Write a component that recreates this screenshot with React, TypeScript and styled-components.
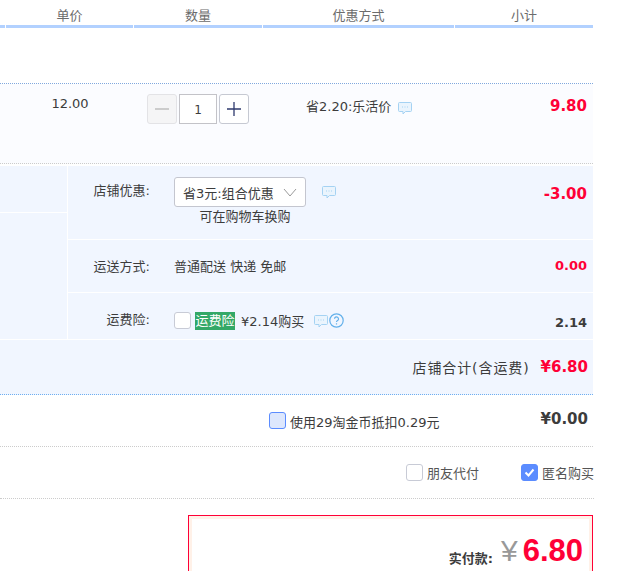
import React from 'react'
import styled, { createGlobalStyle } from 'styled-components'

const GlobalStyle = createGlobalStyle`
  html, body {
    margin: 0;
    height: 571px;
    overflow: hidden;
    background: #fff;
  }
  body {
    font-family: "DejaVu Sans", "Noto Sans CJK SC", sans-serif;
    font-size: 13px;
    color: #3c3c3c;
  }
`

const Page = styled.div`
  width: 593px;
`

const HeaderRow = styled.div`
  display: grid;
  grid-template-columns: 5px 127px 128px 191px 138px;
  gap: 1px;
  height: 28px;
`

const HeaderCell = styled.div`
  height: 25px;
  line-height: 31px;
  border-bottom: 3px solid #b2d1ff;
  text-align: center;
  color: #6c6c6c;
`

const ItemSpacer = styled.div`
  height: 55px;
  border-bottom: 1px dotted #80a8de;
`

const ItemRow = styled.div`
  display: grid;
  grid-template-columns: 6px 128px 129px 192px 138px;
  height: 79px;
  background: #fbfcff;
  border-bottom: 1px dotted #ccc;
`

const Price = styled.div`
  text-align: center;
  padding-top: 12px;
`

const QtyCell = styled.div`
  display: flex;
  justify-content: center;
  gap: 2px;
  padding-top: 10px;
  padding-right: 1px;
`

const QtyButton = styled.div<{ $disabled?: boolean }>`
  width: 28px;
  height: 28px;
  border: 1px solid ${(p) => (p.$disabled ? '#e3e3e6' : '#c6c9d2')};
  border-radius: 3px;
  background: ${(p) => (p.$disabled ? '#f5f5f6' : '#fff')};
  display: flex;
  align-items: center;
  justify-content: center;
`

const QtyInput = styled.div`
  width: 36px;
  height: 28px;
  border: 1px solid #c3c3c8;
  background: #fff;
  font-size: 12px;
  line-height: 30px;
  text-align: center;
`

const PromoCell = styled.div`
  display: flex;
  align-items: flex-start;
  gap: 7px;
  padding: 12px 0 0 43px;
`

const RedAmount = styled.div<{ $size?: number }>`
  text-align: right;
  padding-right: 6px;
  font-weight: bold;
  font-size: ${(p) => p.$size ?? 15}px;
  color: #ff0036;
`

const SubTotal = styled(RedAmount)`
  padding-top: 13px;
`

const Panel = styled.div`
  margin-top: 2px;
  display: grid;
  grid-template-columns: 67px 1fr;
  gap: 1px;
  background: #fff;
`

const LeftColumn = styled.div`
  display: grid;
  grid-template-rows: 46px 1fr;
  gap: 1px;
`

const LeftBlock = styled.div`
  background: #f1f6ff;
`

const RightColumn = styled.div`
  display: flex;
  flex-direction: column;
  gap: 1px;
`

const OptionRow = styled.div<{ $height: number }>`
  display: grid;
  grid-template-columns: 82px 1fr auto;
  height: ${(p) => p.$height}px;
  background: #f1f6ff;
`

const OptionLabel = styled.div<{ $top: number }>`
  text-align: right;
  padding-top: ${(p) => p.$top}px;
`

const OptionBody = styled.div<{ $top: number }>`
  padding: ${(p) => p.$top}px 0 0 24px;
`

const OptionAmount = styled(RedAmount)<{ $top: number; $dark?: boolean }>`
  padding-top: ${(p) => p.$top}px;
  color: ${(p) => (p.$dark ? '#3c3c3c' : '#ff0036')};
`

const SelectLine = styled.div`
  display: flex;
  align-items: flex-start;
  gap: 16px;
`

const Select = styled.div`
  width: 114px;
  height: 28px;
  border: 1px solid #c4c6cf;
  border-radius: 3px;
  background: #fff;
  display: flex;
  align-items: center;
  justify-content: space-between;
  padding: 0 8px;
  white-space: nowrap;
`

const SelectHint = styled.div`
  width: 142px;
  text-align: center;
  margin-top: 2px;
  line-height: 16px;
`

const InsuranceLine = styled.div`
  display: flex;
  align-items: center;
`

const Box = styled.div<{ $checked?: boolean; $tint?: boolean }>`
  width: 15px;
  height: 15px;
  flex: none;
  border: 1px solid ${(p) => (p.$checked || p.$tint ? '#5b8cff' : '#c8cbd6')};
  border-radius: 3px;
  background: ${(p) => (p.$checked ? '#5b8cff' : p.$tint ? '#dde7fd' : '#fff')};
  display: flex;
  align-items: center;
  justify-content: center;
`

const Tag = styled.span`
  margin-left: 4px;
  width: 40px;
  height: 18px;
  line-height: 18px;
  background: #33a867;
  color: #fff;
  white-space: nowrap;
  text-align: center;
`

const InsurancePrice = styled.span`
  margin-left: 6px;
  margin-right: 10px;
`

const TotalRow = styled.div`
  margin-top: 1px;
  height: 54px;
  background: #f1f6ff;
  border-bottom: 1px dotted #6eaef0;
  display: flex;
  justify-content: flex-end;
  align-items: center;
  gap: 11px;
  padding-right: 5px;
`

const TotalLabel = styled.span`
  font-size: 14px;
  letter-spacing: 0.9px;
`

const TotalAmount = styled.span`
  font-weight: bold;
  font-size: 15px;
  color: #ff0036;
`

const CoinRow = styled.div`
  display: grid;
  grid-template-columns: 269px 1fr auto;
  height: 51px;
  border-bottom: 1px dotted #ccc;
`

const CoinLabel = styled.label`
  grid-column: 2;
  display: flex;
  gap: 4px;
  padding-top: 18px;
  line-height: 20px;
`

const CoinBox = styled(Box)`
  margin-top: -1px;
`

const CoinAmount = styled.div`
  padding: 15px 5px 0 0;
  font-weight: bold;
  font-size: 15px;
`

const ChoiceRow = styled.div`
  display: flex;
  justify-content: flex-end;
  gap: 42px;
  height: 52px;
  border-bottom: 1px dotted #ccc;
  padding-top: 17px;
  box-sizing: border-box;
  margin-right: -1px;
`

const Choice = styled.label`
  display: flex;
  gap: 4px;
  line-height: 20px;
  color: #555;
`

const PayBox = styled.div`
  margin: 16px 0 0 188px;
  height: 70px;
  border: 1px solid #ff0036;
  box-shadow: inset 0 0 0 3px #fff1e8;
  display: flex;
  justify-content: flex-end;
  align-items: flex-start;
  padding: 17px 9px 0 0;
`

const PayLabel = styled.span`
  font-weight: bold;
  margin-top: 15px;
`

const Yen = styled.span`
  margin-left: 8px;
  font-family: "Liberation Sans", sans-serif;
  font-size: 30px;
  line-height: 36px;
  color: #999;
`

const PayAmount = styled.span`
  margin-left: 5px;
  font-family: "Liberation Sans", sans-serif;
  font-weight: bold;
  font-size: 31px;
  line-height: 36px;
  color: #ff0036;
`

const IconWrap = styled.span<{ $left?: number; $top?: number }>`
  display: inline-flex;
  flex: none;
  margin-left: ${(p) => p.$left ?? 0}px;
  margin-top: ${(p) => p.$top ?? 0}px;
`

function Bubble() {
  return (
    <svg width="14" height="14" viewBox="0 0 14 14" fill="none">
      <path
        d="M1.5 1.5h11a1 1 0 0 1 1 1v7a1 1 0 0 1-1 1H7.5L5 13v-2.500H1.500a1 1 0 0 1-1-1v-7a1 1 0 0 1 1-1z"
        fill="#eaf4fd"
        stroke="#a5d2f3"
      />
      <path d="M4 6h1M6.500 6h1M9 6h1" stroke="#a5d2f3" />
    </svg>
  )
}

function Help() {
  return (
    <svg width="15" height="15" viewBox="0 0 15 15" fill="none">
      <circle cx="7.500" cy="7.500" r="6.700" stroke="#63b0ea" strokeWidth="1.200" />
      <path d="M5.500 5.800a2 2 0 1 1 3 1.800c-.7.400-1 .8-1 1.500" stroke="#63b0ea" strokeWidth="1.200" />
      <path d="M7.500 10.300v1.200" stroke="#63b0ea" strokeWidth="1.200" />
    </svg>
  )
}

function Chevron() {
  return (
    <svg width="14" height="9" viewBox="0 0 14 9" fill="none">
      <path d="M1 1l6 7 6-7" stroke="#9a9a9a" />
    </svg>
  )
}

function Check() {
  return (
    <svg width="11" height="9" viewBox="0 0 11 9" fill="none">
      <path d="M1.500 4.500l3 3 5-6" stroke="#fff" strokeWidth="2" />
    </svg>
  )
}

export default function App() {
  return (
    <Page>
      <GlobalStyle />
      <HeaderRow>
        <HeaderCell />
        <HeaderCell>单价</HeaderCell>
        <HeaderCell>数量</HeaderCell>
        <HeaderCell>优惠方式</HeaderCell>
        <HeaderCell>小计</HeaderCell>
      </HeaderRow>
      <ItemSpacer />
      <ItemRow>
        <div />
        <Price>12.00</Price>
        <QtyCell>
          <QtyButton $disabled>
            <svg width="14" height="2" viewBox="0 0 14 2">
              <rect width="14" height="2" fill="#ccc" />
            </svg>
          </QtyButton>
          <QtyInput>1</QtyInput>
          <QtyButton>
            <svg width="14" height="14" viewBox="0 0 14 14">
              <path d="M0 7h14M7 0v14" stroke="#2f3a6e" strokeWidth="1.300" />
            </svg>
          </QtyButton>
        </QtyCell>
        <PromoCell>
          <span>省2.20:乐活价</span>
          <IconWrap $top={5}>
            <Bubble />
          </IconWrap>
        </PromoCell>
        <SubTotal>9.80</SubTotal>
      </ItemRow>
      <Panel>
        <LeftColumn>
          <LeftBlock />
          <LeftBlock />
        </LeftColumn>
        <RightColumn>
          <OptionRow $height={73}>
            <OptionLabel $top={14}>店铺优惠:</OptionLabel>
            <OptionBody $top={11}>
              <SelectLine>
                <Select>
                  <span>省3元:组合优惠</span>
                  <Chevron />
                </Select>
                <IconWrap $top={8}>
                  <Bubble />
                </IconWrap>
              </SelectLine>
              <SelectHint>可在购物车换购</SelectHint>
            </OptionBody>
            <OptionAmount $top={19}>-3.00</OptionAmount>
          </OptionRow>
          <OptionRow $height={52}>
            <OptionLabel $top={16}>运送方式:</OptionLabel>
            <OptionBody $top={16}>普通配送 快递 免邮</OptionBody>
            <OptionAmount $top={18} $size={13}>0.00</OptionAmount>
          </OptionRow>
          <OptionRow $height={46}>
            <OptionLabel $top={16}>运费险:</OptionLabel>
            <OptionBody $top={18}>
              <InsuranceLine>
                <Box />
                <Tag>运费险</Tag>
                <InsurancePrice>¥2.14购买</InsurancePrice>
                <Bubble />
                <IconWrap $left={1}>
                  <Help />
                </IconWrap>
              </InsuranceLine>
            </OptionBody>
            <OptionAmount $top={22} $size={13} $dark>2.14</OptionAmount>
          </OptionRow>
        </RightColumn>
      </Panel>
      <TotalRow>
        <TotalLabel>店铺合计(含运费)</TotalLabel>
        <TotalAmount>¥6.80</TotalAmount>
      </TotalRow>
      <CoinRow>
        <CoinLabel>
          <CoinBox $tint />
          使用29淘金币抵扣0.29元
        </CoinLabel>
        <CoinAmount>¥0.00</CoinAmount>
      </CoinRow>
      <ChoiceRow>
        <Choice>
          <Box />
          朋友代付
        </Choice>
        <Choice>
          <Box $checked>
            <Check />
          </Box>
          匿名购买
        </Choice>
      </ChoiceRow>
      <PayBox>
        <PayLabel>实付款:</PayLabel>
        <Yen>¥</Yen>
        <PayAmount>6.80</PayAmount>
      </PayBox>
    </Page>
  )
}
